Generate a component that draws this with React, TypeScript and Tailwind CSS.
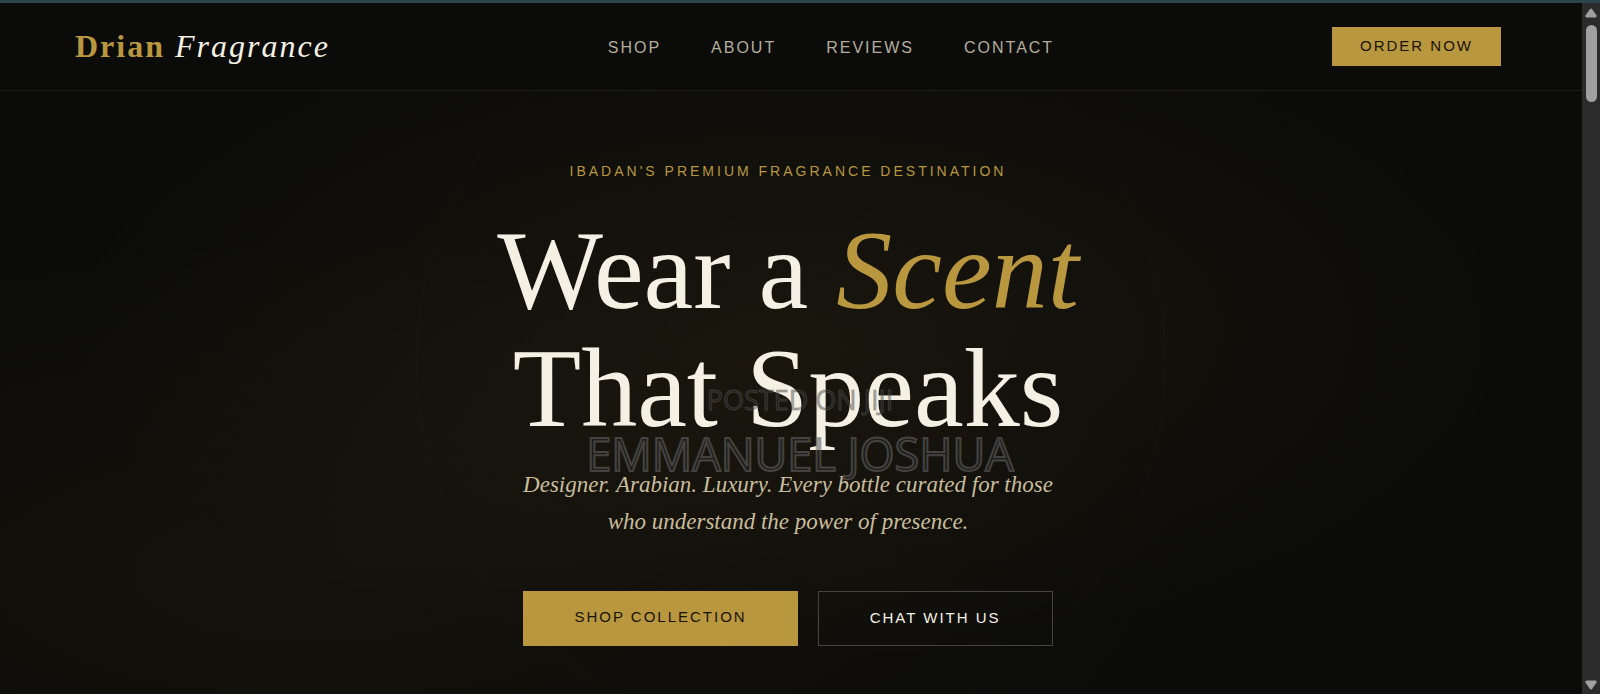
const links = [
  { label: "Shop", href: "#shop" },
  { label: "About", href: "#about" },
  { label: "Reviews", href: "#reviews" },
  { label: "Contact", href: "#contact" },
];

function Header() {
  return (
    <header className="flex items-center justify-between border-b border-[#211d12] bg-[#0b0b09] pt-6 pb-6 pr-[81px] pl-[75px]">
      <a
        href="#top"
        className="font-['Liberation_Serif',serif] text-[32px] leading-[39px] tracking-[2px] text-[#f5f0e4]"
      >
        <b className="text-[#b8973f]">Drian</b> <i>Fragrance</i>
      </a>
      <nav className="flex gap-[50px] pt-0.5">
        {links.map((link) => (
          <a
            key={link.label}
            href={link.href}
            className="text-base tracking-[2px] text-[#b5ae9c] uppercase"
          >
            {link.label}
          </a>
        ))}
      </nav>
      <a
        href="#order"
        className="bg-[#b8973f] px-7 pt-[10px] pb-3 text-[15px] leading-[17px] tracking-[2px] text-[#1a1206] uppercase"
      >
        Order Now
      </a>
    </header>
  );
}

function Hero() {
  return (
    <main className="relative flex flex-1 flex-col items-center overflow-hidden bg-[radial-gradient(ellipse_at_20%_80%,rgba(184,145,63,0.05),transparent_50%),radial-gradient(ellipse_at_50%_40%,rgba(184,145,63,0.08),transparent_65%)] pt-[72px] pr-[6px] pb-11 text-center">
      <div className="absolute top-[-104px] left-1/2 size-[750px] -translate-x-1/2 rounded-full border border-[#b8973f]/4" />
      <p className="text-[14px] leading-[17px] tracking-[3px] text-[#b8973f] uppercase">
        Ibadan's Premium Fragrance Destination
      </p>
      <h1 className="mt-[31px] font-['Liberation_Serif',serif] text-[112px] leading-[118px] text-[#f5f0e4]">
        Wear a <em className="text-[#b8973f]">Scent</em>
        <br />
        That Speaks
      </h1>
      <p className="mt-[19px] font-['Liberation_Serif',serif] text-[23px] leading-[37px] text-[#c9bc9c] italic">
        Designer. Arabian. Luxury. Every bottle curated for those
        <br />
        who understand the power of presence.
      </p>
      <div className="mt-[51px] flex gap-5 text-[15px] leading-[17px] tracking-[2px] uppercase">
        <a href="#shop" className="bg-[#b8973f] px-[51px] pt-[17px] pb-[19px] text-[#1a1206]">
          Shop Collection
        </a>
        <a
          href="#chat"
          className="border border-[#45443f] px-[51px] pt-[17px] pb-[19px] font-medium text-[#f5f0e4]"
        >
          Chat With Us
        </a>
      </div>
    </main>
  );
}

function Watermark() {
  return (
    <div className="pointer-events-none absolute inset-x-0 top-[377px] text-center font-['Open_Sans',sans-serif] text-[#2a2a2c]/40 uppercase">
      <p className="text-[27px] leading-10 [-webkit-text-stroke:1px_rgba(110,110,110,0.4)]">
        Posted on Jiji
      </p>
      <p className="text-[45px] leading-[68px] [-webkit-text-stroke:2px_rgba(110,110,110,0.5)]">
        Emmanuel Joshua
      </p>
    </div>
  );
}

function Scrollbar() {
  return (
    <div className="flex w-[18px] flex-col items-center bg-[#2b2b2b] pt-[5px] pb-1">
      <svg width="12" height="10" viewBox="0 0 12 10" fill="#a0a0a0">
        <path d="M5 1Q6 0 7 1L11.6 7.5Q12 9.5 10.5 9.5H1.5Q0 9.5 0.4 7.5Z" />
      </svg>
      <div className="mt-[7px] h-[77px] w-[11px] rounded-full bg-[#a0a0a0]" />
      <svg className="mt-auto" width="12" height="10" viewBox="0 0 12 10" fill="#a0a0a0">
        <path d="M5 9Q6 10 7 9L11.6 2.5Q12 0.5 10.5 0.5H1.5Q0 0.5 0.4 2.5Z" />
      </svg>
    </div>
  );
}

function App() {
  return (
    <div className="relative flex min-h-screen flex-col overflow-hidden border-t-3 border-[#2d444b] bg-[#0b0b09] font-['Liberation_Sans',sans-serif]">
      <div className="flex flex-1">
        <div className="flex flex-1 flex-col">
          <Header />
          <Hero />
        </div>
        <Scrollbar />
      </div>
      <Watermark />
    </div>
  );
}

export default App;
